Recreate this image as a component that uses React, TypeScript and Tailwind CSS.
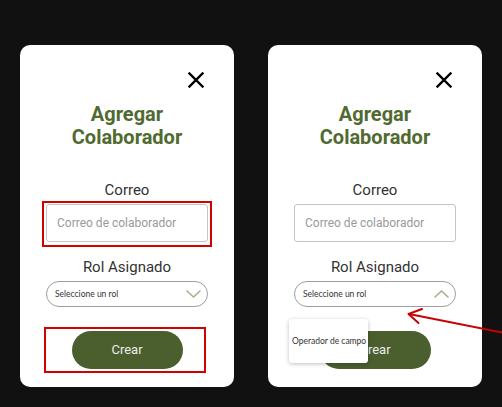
import React from "react";

function CloseIcon() {
  return (
    <svg width="16" height="16" viewBox="0 0 16 16" fill="none">
      <path d="M1.5 1.5 L14.5 14.5 M14.5 1.5 L1.5 14.5" stroke="#000" strokeWidth="2.4" strokeLinecap="square" />
    </svg>
  );
}

function Chevron({ up }: { up?: boolean }) {
  return (
    <svg width="15" height="8" viewBox="0 0 15 8" fill="none">
      <path
        d={up ? "M1 7 L7.5 1 L14 7" : "M1 1 L7.5 7 L14 1"}
        stroke="#a7ae8e"
        strokeWidth="1.6"
        strokeLinecap="round"
        strokeLinejoin="round"
      />
    </svg>
  );
}

function ModalCard({ open }: { open?: boolean }) {
  return (
    <div className="relative w-[214px] h-[342px] bg-white rounded-[10px] flex flex-col items-center px-[26px] font-['Roboto',sans-serif]">
      <div className="self-stretch flex justify-end pt-[27px] pr-[4px]">
        <CloseIcon />
      </div>

      <h2 className="mt-[15px] text-[20px] leading-[23px] font-bold text-center text-[#506a30]">
        Agregar
        <br />
        Colaborador
      </h2>

      <label className="mt-[32px] text-[15px] leading-[18px] font-normal text-[#333]">Correo</label>
      <input
        className="mt-[5px] h-[38px] w-full border border-[#c4c4c4] rounded-[3px] px-[10px] text-[12px] outline-none placeholder:text-[#9a9a9a]"
        placeholder="Correo de colaborador"
      />

      <label className="mt-[16px] text-[15px] leading-[18px] font-normal text-[#333]">Rol Asignado</label>
      <div className="mt-[5px] h-[26px] w-full border border-[#9e9e9e] rounded-full flex items-center justify-between pl-[8px] pr-[6px]">
        <span className="text-[8.5px] text-[#333] font-['Lato',sans-serif]">Seleccione un rol</span>
        <Chevron up={open} />
      </div>

      <button className="mt-[24px] h-[38px] w-[111px] rounded-full bg-[#4b5e2e] text-[#ececec] text-[13px]">
        Crear
      </button>

      {!open && (
        <>
          <div className="absolute left-[22px] top-[156px] w-[170px] h-[46px] border-2 border-[#d40000]" />
          <div className="absolute left-[24px] top-[282px] w-[162px] h-[46px] border-2 border-[#d40000]" />
        </>
      )}

      {open && (
        <div className="absolute left-[21px] top-[274px] w-[79px] h-[44px] bg-white rounded-[3px] shadow-[0_1px_4px_rgba(0,0,0,0.25)] flex items-center pl-[3px]">
          <span className="text-[8.5px] text-[#333] font-['Lato',sans-serif] whitespace-nowrap">Operador de campo</span>
        </div>
      )}
    </div>
  );
}

export default function App() {
  return (
    <div className="relative w-[502px] h-[407px] bg-[#111111] flex items-start gap-[34px] pl-[20px] pt-[45px] overflow-hidden">
      <ModalCard />
      <ModalCard open />

      <svg className="absolute inset-0 pointer-events-none" width="502" height="407" viewBox="0 0 502 407" fill="none">
        <path d="M409 314 L504 333" stroke="#c80000" strokeWidth="2" />
        <path d="M422 309 L408.5 314 L418.5 323" stroke="#c80000" strokeWidth="2" strokeLinecap="round" strokeLinejoin="round" />
      </svg>
    </div>
  );
}
